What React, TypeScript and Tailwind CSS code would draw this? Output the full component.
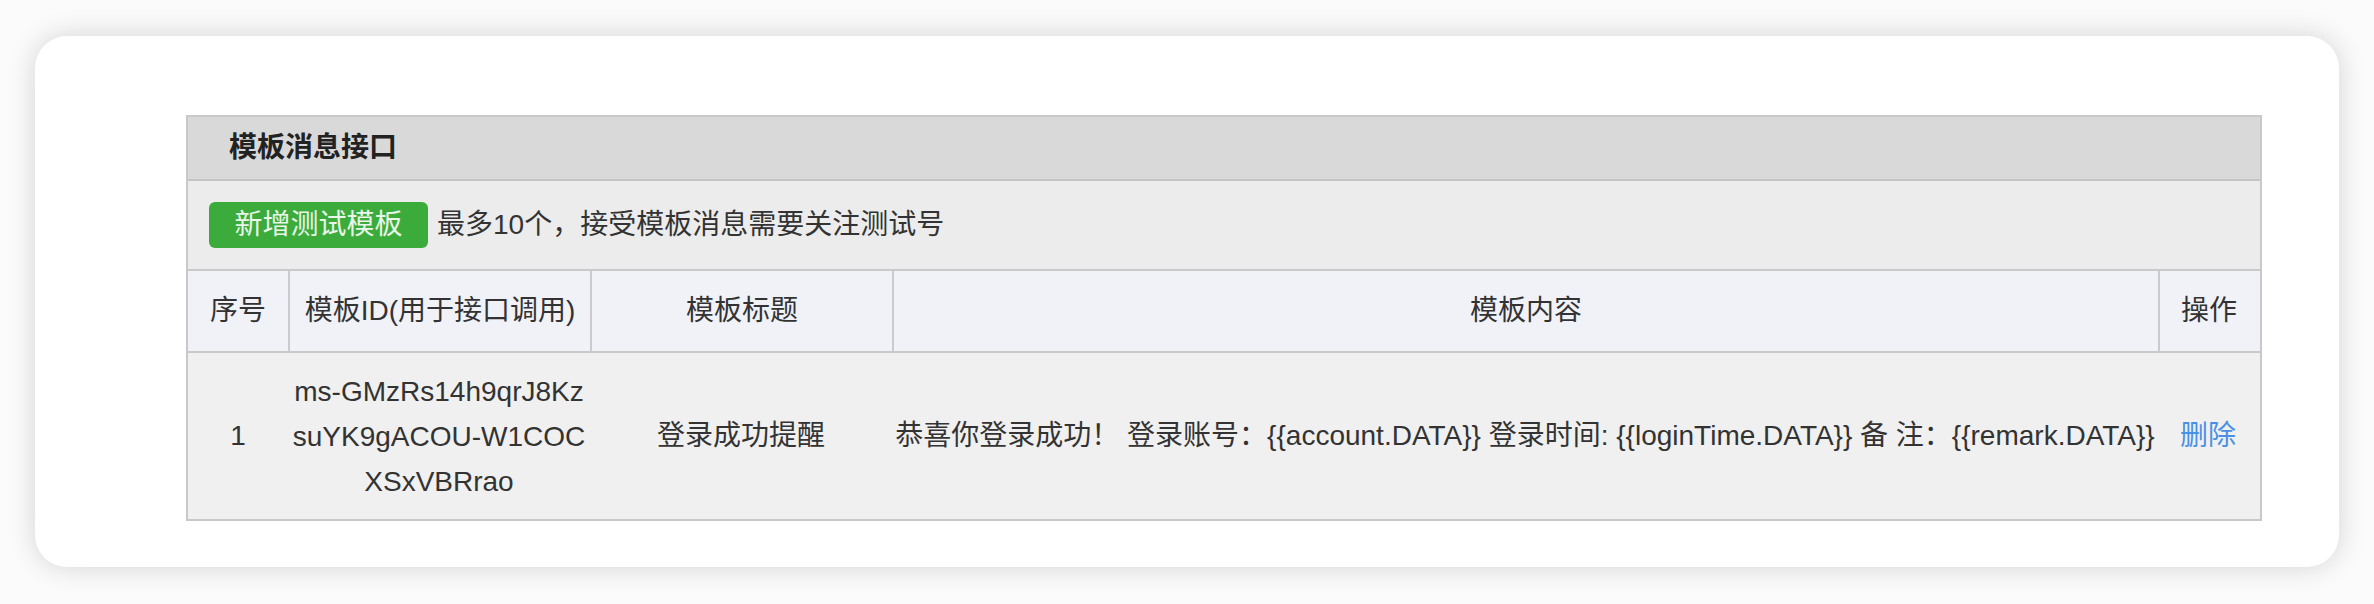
export default function App() {
  const font = { fontFamily: '"Liberation Sans", "Noto Sans CJK SC", sans-serif' };

  return (
    <div className="min-h-screen bg-[#fbfbfb] px-[35px] pt-[36px] pb-[37px]" style={font}>
      {/* Card */}
      <div className="rounded-[32px] bg-white pl-[151px] pr-[77px] pt-[79px] pb-[46px] shadow-[0_0_28px_rgba(0,0,0,0.16)]">
        {/* Panel */}
        <div className="border-2 border-[#c9c9c9] text-[28px] text-[#333]">
          {/* Title bar */}
          <div className="flex h-[64px] items-center border-b-2 border-[#c4c4c4] bg-[#d9d9d9] pl-[41px] font-bold text-[#222]">
            模板消息接口
          </div>

          {/* Toolbar */}
          <div className="flex h-[90px] items-center gap-[9px] border-b-2 border-[#c9c9c9] bg-[#ececec] pl-[21px]">
            <button className="flex h-[46px] w-[219px] items-center justify-center rounded-[6px] bg-[#3bac3b] text-[28px] text-[#e9f6e9]">
              新增测试模板
            </button>
            <span>最多10个，接受模板消息需要关注测试号</span>
          </div>

          {/* Table header */}
          <div className="grid h-[82px] grid-cols-[100px_302px_302px_1266px_100px] border-b-2 border-[#c9c9c9] bg-[#f1f2f8]">
            <div className="flex items-center justify-center">序号</div>
            <div className="flex items-center justify-center border-l-2 border-[#cbcbcb]">模板ID(用于接口调用)</div>
            <div className="flex items-center justify-center border-l-2 border-[#cbcbcb]">模板标题</div>
            <div className="flex items-center justify-center border-l-2 border-[#cbcbcb]">模板内容</div>
            <div className="flex items-center justify-center border-l-2 border-[#cbcbcb]">操作</div>
          </div>

          {/* Row */}
          <div className="grid h-[166px] grid-cols-[100px_302px_302px_1266px_100px] bg-[#f0f0f0]">
            <div className="flex items-center justify-center">1</div>
            <div className="flex items-center justify-center">
              <div className="w-[296px] break-all text-center leading-[45px]">
                ms-GMzRs14h9qrJ8KzsuYK9gACOU-W1COCXSxVBRrao
              </div>
            </div>
            <div className="flex items-center justify-center">登录成功提醒</div>
            <div className="flex items-center justify-center whitespace-nowrap">
              恭喜你登录成功！ 登录账号：{'{{account.DATA}}'} 登录时间: {'{{loginTime.DATA}}'} 备 注：{'{{remark.DATA}}'}
            </div>
            <div className="flex items-center justify-center">
              <a className="cursor-pointer text-[#4a90e6]">删除</a>
            </div>
          </div>
        </div>
      </div>
    </div>
  );
}
